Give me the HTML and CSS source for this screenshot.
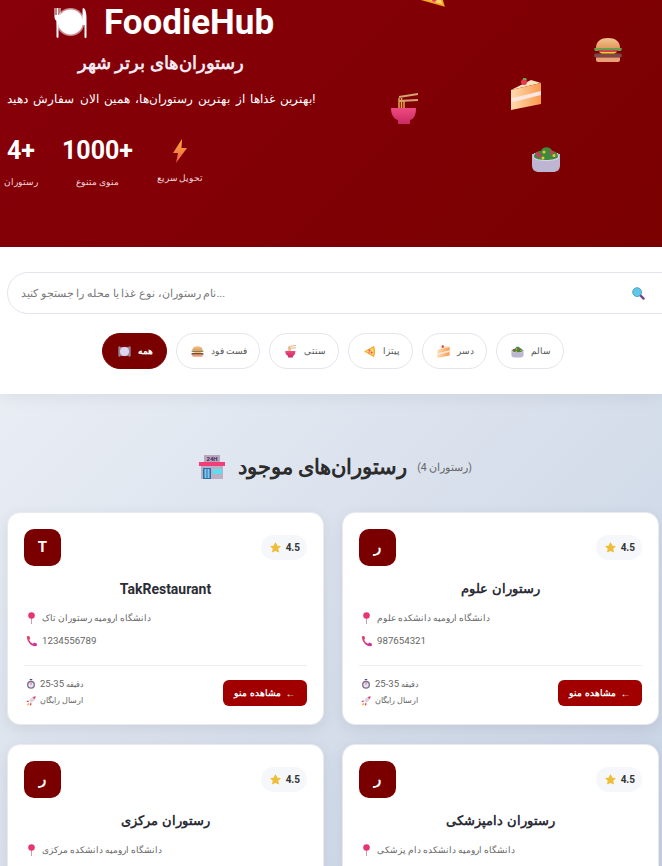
FILE: index.html
```html
<!DOCTYPE html>
<html lang="fa">
  <head>
    <meta charset="UTF-8" />
    <meta name="viewport" content="width=device-width, initial-scale=1.0" />
    <title>FoodieHub</title>
    <link rel="stylesheet" href="styles.css">
  </head>
  <body>
    <svg class="sprite" aria-hidden="true">
      <defs>
        <linearGradient id="g-bun" x1="0" y1="0" x2="0" y2="1"><stop offset="0" stop-color="#f3c48f"/><stop offset="1" stop-color="#e09a5c"/></linearGradient>
        <linearGradient id="g-cake" x1="0" y1="0" x2="1" y2="0"><stop offset="0" stop-color="#ffdcb0"/><stop offset="1" stop-color="#f99a4d"/></linearGradient>
        <linearGradient id="g-bowl" x1="0" y1="0" x2="0" y2="1"><stop offset="0" stop-color="#ee4a80"/><stop offset="1" stop-color="#c92a62"/></linearGradient>
        <linearGradient id="g-bolt" x1="0" y1="0" x2="0" y2="1"><stop offset="0" stop-color="#ffb13d"/><stop offset="1" stop-color="#ea5a4a"/></linearGradient>
        <linearGradient id="g-phone" x1="0" y1="0" x2="1" y2="1"><stop offset="0" stop-color="#e8475e"/><stop offset="1" stop-color="#c92c9e"/></linearGradient>
      </defs>
      <symbol id="i-plate" viewBox="0 0 34 32">
        <path d="M1 1v9c0 2 1 3 2 4v16c0 1 2 1 2 0V14c1-1 2-2 2-4V1H6v7H5V1H3v7H2V1z"/>
        <circle cx="17" cy="15" r="14" opacity=".55"/>
        <circle cx="17" cy="15" r="12.500"/>
        <path d="M30 1c2 1 3 5 3 11v18c0 1.500-2 1.500-2 0V18h-2V4c0-2 0-3 1-3z"/>
      </symbol>
      <symbol id="i-plate-color" viewBox="0 0 34 32">
        <path fill="#b9b3c4" d="M1 4h32v24H1z" opacity=".7"/>
        <circle cx="17" cy="16" r="12" fill="#dcd6f0"/>
        <path fill="#8f8aa0" d="M2 2h3v28H2zM29 2h3v28h-3z"/>
      </symbol>
      <symbol id="i-burger" viewBox="0 0 30 26">
        <path fill="url(#g-bun)" d="M3 11C3 4 8 1 15 1s12 3 12 10z"/>
        <path fill="#66a24e" d="M1 11h28l-1 3H2z"/>
        <path fill="#d8404c" d="M4 13h22l-3 2H7z"/>
        <path fill="#f5c52e" d="M6 15h18l-3 2H9z"/>
        <rect x="1" y="16.500" width="28" height="4" rx="2" fill="#7b4a46"/>
        <path fill="#eb9f78" d="M3 20.500h24V23a2 2 0 0 1-2 2H5a2 2 0 0 1-2-2z"/>
      </symbol>
      <symbol id="i-cake" viewBox="0 0 32 32">
        <path fill="#fbe2bf" d="M1 12 21 2l10 3z"/>
        <path fill="url(#g-cake)" d="M1 12 31 5v21L1 32z"/>
        <path fill="#fde6e0" d="M1 20.500 31 13v4L1 24.500z"/>
        <circle cx="14" cy="4" r="3" fill="#e23b4a"/>
        <path fill="#6ba84f" d="M13 0h3l1 2h-4z"/>
      </symbol>
      <symbol id="i-pizza" viewBox="0 0 24 24">
        <path fill="#f5a623" d="M2 12 20 2c3 6 3 14 0 20z"/>
        <path fill="#ffd66b" d="M5 12 18.500 5c2 4 2 10 0 14z"/>
        <circle cx="12" cy="10" r="1.800" fill="#e8456b"/>
        <circle cx="16" cy="14" r="1.800" fill="#e8456b"/>
        <circle cx="11" cy="14.500" r="1.200" fill="#e8456b"/>
      </symbol>
      <symbol id="i-noodles" viewBox="0 0 28 32">
        <path fill="none" stroke="#e3a84c" stroke-width="1.500" d="M9 16V5M11.500 16V5M14 16V7"/>
        <path stroke="#d7a272" stroke-width="2" d="M9 4 28 1M9 8l19-1"/>
        <path fill="url(#g-bowl)" d="M1 15h25c0 7-2 11-6 12v4H8v-4c-4-1-7-5-7-12z"/>
      </symbol>
      <symbol id="i-salad" viewBox="0 0 30 30">
        <path fill="#bdb6d2" d="M1 11h28v11c0 5-3 7-7 7H8c-4 0-7-2-7-7z"/>
        <path fill="#d8d4e6" d="M3 10h24l1 5c-3 4-23 4-26 0z"/>
        <path fill="#3f8a3f" d="M3 14c0-4 3-6 7-6 1-5 10-5 11 0 4 0 6 3 6 6-2 4-22 4-24 0z"/>
        <path fill="#d6355f" d="M5 9c3 0 5 2 6 5l-5 0zM19 7c2 0 4 1 4 3l-3 2z"/>
        <circle cx="13" cy="9" r="1.500" fill="#f0c62d"/><circle cx="12" cy="15" r="1.500" fill="#f0c62d"/><circle cx="23" cy="12.500" r="1.500" fill="#f0c62d"/>
      </symbol>
      <symbol id="i-search" viewBox="0 0 14 14">
        <path stroke="#7a3f8c" stroke-width="2.500" stroke-linecap="round" d="M8.500 8.500 12.500 12.500"/>
        <circle cx="5.500" cy="5.500" r="4.800" fill="#5fc7ea" stroke="#3a8fb7" stroke-width=".8"/>
      </symbol>
      <symbol id="i-shop" viewBox="0 0 26 24">
        <rect x="5" y="0" width="16" height="7" fill="#b9a6bd"/>
        <text x="13" y="6" font-size="6" font-weight="700" text-anchor="middle" font-family="Roboto" fill="#3e2a5a">24H</text>
        <path fill="#b9b0c4" d="M2 10h22v14H2z"/>
        <path fill="#ef3e78" d="M0 7h26v4H0z"/>
        <path fill="#2e6ea8" d="M4 13h8v11H4z"/><path fill="#7cc8ee" d="M5.500 14h2v9h-2zM8.500 14h2v9h-2z"/>
        <path fill="#5fdcf0" d="M14 14h9v5h-9z"/>
      </symbol>
      <symbol id="i-star" viewBox="0 0 16 16">
        <path fill="#eebd33" stroke="#eebd33" stroke-linejoin="round" stroke-width="1.500" d="m8 1.500 2 4.300 4.600.6-3.400 3.200.9 4.600L8 11.900l-4.100 2.300.9-4.600L1.400 6.400 6 5.800z"/>
      </symbol>
      <symbol id="i-pin" viewBox="0 0 12 14">
        <path stroke="#c9a0a8" stroke-width="1.200" d="M6 6v8"/>
        <circle cx="6" cy="4" r="3.800" fill="#e8356f"/>
      </symbol>
      <symbol id="i-phone" viewBox="0 0 14 14">
        <path fill="url(#g-phone)" d="M1 1 4 .500l1.500 3.500L4 5.500C5 8 6.500 9.500 9 10.500l1.500-1.500 3.500 1.500-.5 3c-6 1-12-4-12.500-12.500z"/>
      </symbol>
      <symbol id="i-timer" viewBox="0 0 12 12">
        <path fill="#57496b" d="M4.500 0h3v1.500h-3z"/>
        <circle cx="6" cy="7" r="4.800" fill="#7b6f90"/>
        <circle cx="6" cy="7" r="3.200" fill="#e8e4ef"/>
        <path stroke="#e8456b" d="M6 7V4.500"/>
      </symbol>
      <symbol id="i-rocket" viewBox="0 0 14 14">
        <path fill="#d9d4e4" d="M13.500.500c-4 .5-7 2-9 6l3 3c4-2 5.500-5 6-9z"/>
        <path fill="#e8456b" d="M13.500.500c-2 .2-3.500.8-4 1.500l2.500 2.500c.7-.5 1.300-2 1.500-4zM4.500 6.500H1.500L.5 8.500h3zM7.500 9.500v3l-2 1v-3z"/>
        <path fill="#f5a623" d="M3 9.500 5 11.500 1 13.500z"/>
      </symbol>
      <symbol id="i-bolt" viewBox="0 0 14 24">
        <path fill="url(#g-bolt)" d="M9 0 0 14h5l-2 10 11-15H8.500z"/>
      </symbol>
    </svg>

    <header class="hero">
      <div class="hero-text">
        <div class="logo">
          <svg class="logo-icon"><use href="#i-plate"/></svg>
          <span>FoodieHub</span>
        </div>
        <h2 class="hero-sub">رستوران‌های برتر شهر</h2>
        <p class="hero-tag">بهترین غذاها از بهترین رستوران‌ها، همین الان سفارش دهید!</p>
        <div class="stats">
          <div class="stat">
            <div class="stat-num">4+</div>
            <div class="stat-label">رستوران</div>
          </div>
          <div class="stat">
            <div class="stat-num">1000+</div>
            <div class="stat-label">منوی متنوع</div>
          </div>
          <div class="stat">
            <svg class="stat-icon"><use href="#i-bolt"/></svg>
            <div class="stat-label">تحویل سریع</div>
          </div>
        </div>
      </div>
      <svg class="float float-pizza"><use href="#i-pizza"/></svg>
      <svg class="float float-burger"><use href="#i-burger"/></svg>
      <svg class="float float-cake"><use href="#i-cake"/></svg>
      <svg class="float float-noodles"><use href="#i-noodles"/></svg>
      <svg class="float float-salad"><use href="#i-salad"/></svg>
    </header>

    <section class="search-section">
      <div class="search-box">
        <span class="search-hint">نام رستوران، نوع غذا یا محله را جستجو کنید...</span>
        <svg class="search-icon"><use href="#i-search"/></svg>
      </div>
      <div class="filters">
        <button class="pill active"><svg class="pill-icon"><use href="#i-plate-color"/></svg>همه</button>
        <button class="pill"><svg class="pill-icon"><use href="#i-burger"/></svg>فست فود</button>
        <button class="pill"><svg class="pill-icon"><use href="#i-noodles"/></svg>سنتی</button>
        <button class="pill"><svg class="pill-icon"><use href="#i-pizza"/></svg>پیتزا</button>
        <button class="pill"><svg class="pill-icon"><use href="#i-cake"/></svg>دسر</button>
        <button class="pill"><svg class="pill-icon"><use href="#i-salad"/></svg>سالم</button>
      </div>
    </section>

    <main class="listing">
      <div class="listing-head">
        <svg class="shop-icon"><use href="#i-shop"/></svg>
        <h2>رستوران‌های موجود</h2>
        <span class="count">(4 رستوران)</span>
      </div>

      <div class="grid">
        <article class="card">
          <div class="card-top">
            <div class="avatar">T</div>
            <div class="rating"><svg class="star"><use href="#i-star"/></svg>4.5</div>
          </div>
          <h3>TakRestaurant</h3>
          <div class="info"><svg class="info-icon"><use href="#i-pin"/></svg>دانشگاه ارومیه رستوران تاک</div>
          <div class="info phone"><svg class="info-icon"><use href="#i-phone"/></svg>1234556789</div>
          <div class="card-foot">
            <div class="meta">
              <div><svg class="meta-icon"><use href="#i-timer"/></svg><span><span class="num">25-35</span> دقیقه</span></div>
              <div><svg class="meta-icon"><use href="#i-rocket"/></svg>ارسال رایگان</div>
            </div>
            <button class="menu-btn">مشاهده منو<span class="arrow">←</span></button>
          </div>
        </article>

        <article class="card">
          <div class="card-top">
            <div class="avatar">ر</div>
            <div class="rating"><svg class="star"><use href="#i-star"/></svg>4.5</div>
          </div>
          <h3 class="name-fa">رستوران علوم</h3>
          <div class="info"><svg class="info-icon"><use href="#i-pin"/></svg>دانشگاه ارومیه دانشکده علوم</div>
          <div class="info phone"><svg class="info-icon"><use href="#i-phone"/></svg>987654321</div>
          <div class="card-foot">
            <div class="meta">
              <div><svg class="meta-icon"><use href="#i-timer"/></svg><span><span class="num">25-35</span> دقیقه</span></div>
              <div><svg class="meta-icon"><use href="#i-rocket"/></svg>ارسال رایگان</div>
            </div>
            <button class="menu-btn">مشاهده منو<span class="arrow">←</span></button>
          </div>
        </article>

        <article class="card">
          <div class="card-top">
            <div class="avatar">ر</div>
            <div class="rating"><svg class="star"><use href="#i-star"/></svg>4.5</div>
          </div>
          <h3 class="name-fa">رستوران مرکزی</h3>
          <div class="info"><svg class="info-icon"><use href="#i-pin"/></svg>دانشگاه ارومیه دانشکده مرکزی</div>
          <div class="info phone"><svg class="info-icon"><use href="#i-phone"/></svg>123456789</div>
          <div class="card-foot">
            <div class="meta">
              <div><svg class="meta-icon"><use href="#i-timer"/></svg><span><span class="num">25-35</span> دقیقه</span></div>
              <div><svg class="meta-icon"><use href="#i-rocket"/></svg>ارسال رایگان</div>
            </div>
            <button class="menu-btn">مشاهده منو<span class="arrow">←</span></button>
          </div>
        </article>

        <article class="card">
          <div class="card-top">
            <div class="avatar">ر</div>
            <div class="rating"><svg class="star"><use href="#i-star"/></svg>4.5</div>
          </div>
          <h3 class="name-fa">رستوران دامپزشکی</h3>
          <div class="info"><svg class="info-icon"><use href="#i-pin"/></svg>دانشگاه ارومیه دانشکده دام پزشکی</div>
          <div class="info phone"><svg class="info-icon"><use href="#i-phone"/></svg>123456789</div>
          <div class="card-foot">
            <div class="meta">
              <div><svg class="meta-icon"><use href="#i-timer"/></svg><span><span class="num">25-35</span> دقیقه</span></div>
              <div><svg class="meta-icon"><use href="#i-rocket"/></svg>ارسال رایگان</div>
            </div>
            <button class="menu-btn">مشاهده منو<span class="arrow">←</span></button>
          </div>
        </article>
      </div>
    </main>
  </body>
</html>
```

FILE: styles.css
```css
* {
  box-sizing: border-box;
}
html,
body {
  overflow-x: hidden;
}
body {
  margin: 0;
  font-family: Roboto, sans-serif;
  background: linear-gradient(135deg, #f5f7fa 0%, #c3cfe2 100%);
  color: #333;
}
.sprite {
  position: absolute;
  width: 0;
  height: 0;
}
svg {
  flex-shrink: 0;
}

/* hero */
.hero {
  position: relative;
  height: 247px;
  padding: 0 7px;
  overflow: hidden;
  background: linear-gradient(135deg, #87000a 0%, #7a0000 100%);
  color: #fff;
}
.hero-text {
  width: 308px;
  text-align: center;
}
.logo {
  display: flex;
  align-items: center;
  justify-content: center;
  gap: 16px;
  height: 46px;
  padding-left: 5px;
  font-size: 35px;
  font-weight: 700;
  line-height: 46px;
}
.logo-icon {
  width: 35px;
  height: 32px;
  fill: #fff;
}
.hero-sub {
  margin: 0;
  padding-top: 4px;
  font-size: 18px;
  font-weight: 700;
  line-height: 26px;
  color: #f3eaf3;
}
.hero-tag {
  margin: 14px 0 0;
  font-size: 12.4px;
  line-height: 18px;
  word-spacing: 2.2px;
  white-space: nowrap;
}
.stats {
  display: flex;
  gap: 24px;
  margin: 27px 0 0 -3px;
}
.stat {
  text-align: center;
}
.stat-num {
  height: 32px;
  font-size: 25px;
  font-weight: 700;
  line-height: 32px;
}
.stat-icon {
  display: block;
  width: 14px;
  height: 24px;
  margin: 4px auto;
}
.stat-label {
  margin-top: 9px;
  font-size: 8.5px;
  line-height: 12px;
  word-spacing: -1px;
  color: #f3d6dc;
  white-space: nowrap;
}
.float {
  position: absolute;
}
.float-pizza {
  left: 421px;
  top: -17px;
  width: 30px;
  height: 30px;
  transform: rotate(-135deg);
}
.float-burger {
  left: 593px;
  top: 37px;
  width: 30px;
  height: 26px;
}
.float-cake {
  left: 510px;
  top: 78px;
  width: 32px;
  height: 32px;
}
.float-noodles {
  left: 390px;
  top: 93px;
  width: 28px;
  height: 32px;
}
.float-salad {
  left: 531px;
  top: 143px;
  width: 30px;
  height: 30px;
}

/* search */
.search-section {
  height: 147px;
  padding: 25px 0 0 7px;
  overflow: hidden;
  background: #fff;
  box-shadow: 0 4px 16px rgba(0, 0, 0, 0.06);
}
.search-box {
  display: flex;
  align-items: center;
  justify-content: space-between;
  width: 690px;
  height: 42px;
  padding: 0 17px 0 13px;
  border: 1px solid #e3e5ec;
  border-radius: 21px;
}
.search-hint {
  font-size: 10.8px;
  color: #777;
}
.search-icon {
  width: 13px;
  height: 13px;
  margin-right: 34px;
}
.filters {
  display: flex;
  justify-content: center;
  gap: 9px;
  margin: 19px 0 0 -3px;
}
.pill {
  display: flex;
  align-items: center;
  gap: 7px;
  height: 36px;
  padding: 0 12px 0 14px;
  border: 1px solid #e3e5ec;
  border-radius: 18px;
  background: #fff;
  font-family: inherit;
  font-size: 9px;
  color: #555;
}
.pill.active {
  padding: 0 13px 0 15px;
  background: #7a0000;
  border-color: #7a0000;
  color: #fff;
  font-weight: 700;
}
.pill-icon {
  width: 13px;
  height: 13px;
}

/* list */
.listing {
  padding: 54px 3px 30px 7px;
}
.listing-head {
  display: flex;
  align-items: center;
  justify-content: center;
  gap: 13px;
  height: 38px;
  margin-left: 5px;
}
.shop-icon {
  width: 26px;
  height: 24px;
}
.listing-head h2 {
  margin: 0;
  font-size: 21px;
  font-weight: 700;
  color: #2c2c2c;
}
.count {
  margin-left: -3px;
  font-size: 10.5px;
  color: #666;
}
.grid {
  display: grid;
  grid-template-columns: 1fr 1fr;
  gap: 19px 18px;
  margin-top: 26px;
}
.card {
  height: 213px;
  padding: 16px;
  border: 1px solid #e8eaf0;
  border-radius: 13px;
  background: #fff;
  box-shadow: 0 4px 15px rgba(0, 0, 0, 0.08);
}
.card-top {
  display: flex;
  align-items: center;
  justify-content: space-between;
}
.avatar {
  display: flex;
  align-items: center;
  justify-content: center;
  width: 37px;
  height: 37px;
  padding-bottom: 2px;
  border-radius: 10px;
  background: #7a0000;
  color: #fff;
  font-size: 15px;
  font-weight: 700;
}
.rating {
  display: flex;
  align-items: center;
  gap: 5px;
  height: 25px;
  padding: 0 7px 0 9px;
  border-radius: 13px;
  background: #f6f7fa;
  font-size: 10px;
  font-weight: 700;
}
.star {
  width: 11px;
  height: 11px;
}
.card h3 {
  margin: 12px 0 11px;
  font-size: 14px;
  line-height: 22px;
  font-weight: 700;
  text-align: center;
  color: #2c2c35;
}
.card h3.name-fa {
  font-size: 13px;
}
.info {
  display: flex;
  align-items: center;
  gap: 5px;
  height: 13px;
  margin-bottom: 10px;
  padding-left: 2px;
  font-size: 8.5px;
  color: #666;
}
.info.phone {
  font-size: 9.7px;
}
.info-icon {
  width: 11px;
  height: 12px;
}
.card-foot {
  display: flex;
  align-items: center;
  justify-content: space-between;
  margin-top: 18px;
  padding-top: 11px;
  border-top: 1px solid #eceef2;
}
.meta {
  margin-top: -2px;
  font-size: 8px;
  color: #666;
}
.meta div {
  display: flex;
  align-items: center;
  gap: 4px;
  height: 17px;
  padding-left: 2px;
}
.num {
  font-size: 9.5px;
}
.meta-icon {
  width: 10px;
  height: 10px;
}
.menu-btn {
  display: flex;
  align-items: center;
  justify-content: center;
  gap: 5px;
  width: 84px;
  height: 26px;
  border: none;
  border-radius: 6px;
  background: #a00000;
  color: #fff;
  font-family: inherit;
  font-size: 8.5px;
  font-weight: 700;
}
.arrow {
  font-size: 10px;
  font-weight: 400;
}
```
